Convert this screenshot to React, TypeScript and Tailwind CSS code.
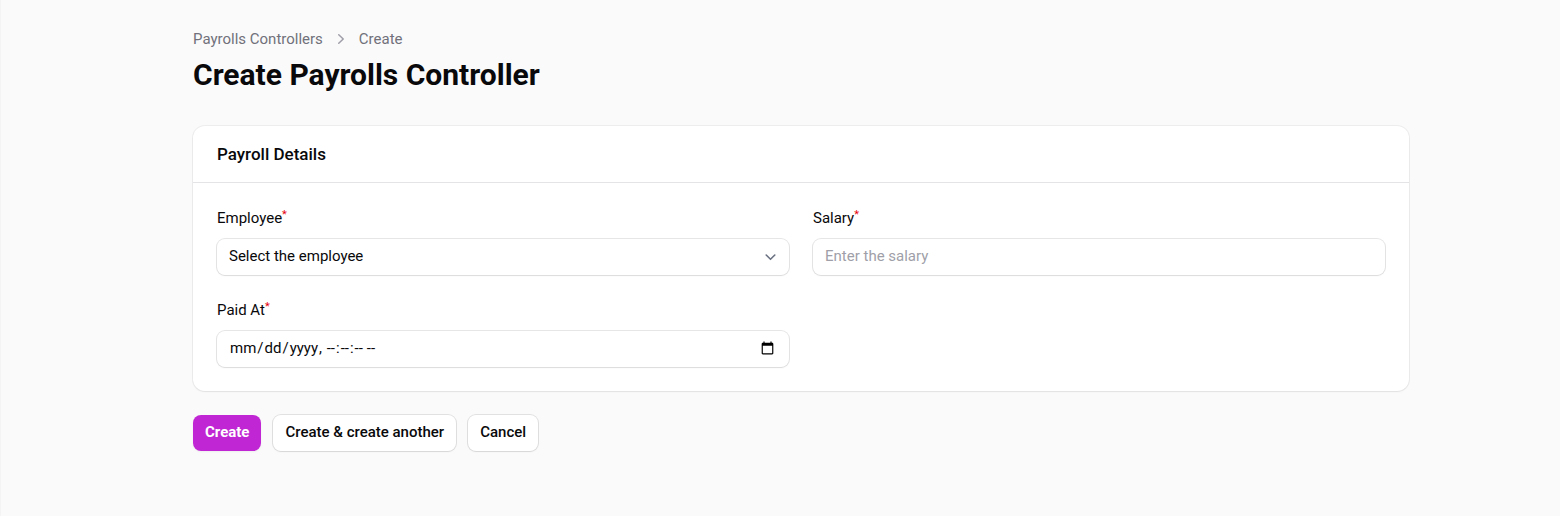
import type { ButtonHTMLAttributes, ReactNode } from "react";

const control =
  "h-9 w-full rounded-lg bg-white px-3 pb-0.5 text-[15px] text-zinc-950 shadow-xs ring-1 ring-zinc-950/10 outline-none focus:ring-2 focus:ring-[#c026d3]";

function Field({ id, label, children }: { id: string; label: string; children: ReactNode }) {
  return (
    <div className="grid content-start gap-2">
      <label htmlFor={id} className="flex h-6 items-start text-[15px] leading-[22px] text-zinc-950">
        {label}
        <span className="text-[11px] leading-4 text-red-600" aria-hidden="true">*</span>
      </label>
      {children}
    </div>
  );
}

function SecondaryButton(props: ButtonHTMLAttributes<HTMLButtonElement>) {
  return (
    <button
      type="button"
      className="h-9 rounded-lg bg-white px-3 pb-0.5 text-[15px] font-medium text-zinc-950 shadow-xs ring-1 ring-zinc-950/10 hover:bg-zinc-50"
      {...props}
    />
  );
}

export default function App() {
  return (
    <div className="min-h-screen border-l border-zinc-100 bg-[#fafafa] pl-[41px] font-['Roboto',sans-serif] text-zinc-950">
      <main className="mx-auto max-w-7xl px-8 pt-[29px] pb-8">
        <nav aria-label="Breadcrumb">
          <ol className="flex items-center gap-2 text-[15px] leading-5 text-zinc-500">
            <li><a href="#payrolls">Payrolls Controllers</a></li>
            <li className="flex items-center gap-2">
              <svg viewBox="0 0 20 20" className="size-5 text-zinc-400" fill="currentColor" aria-hidden="true">
                <path fillRule="evenodd" clipRule="evenodd" d="M7.21 14.77a.75.75 0 0 1 .02-1.06L11.168 10 7.23 6.29a.75.75 0 1 1 1.04-1.08l4.5 4.25a.75.75 0 0 1 0 1.08l-4.5 4.25a.75.75 0 0 1-1.06-.02Z" />
              </svg>
              <a href="#create">Create</a>
            </li>
          </ol>
        </nav>
        <h1 className="mt-2 text-3xl leading-9 font-bold">Create Payrolls Controller</h1>

        <form className="mt-[33px]">
          <section className="rounded-xl bg-white shadow-xs ring-1 ring-zinc-950/5">
            <h2 className="px-6 py-4 text-[17px] leading-6 font-medium">Payroll Details</h2>
            <div className="grid gap-6 border-t border-zinc-200 p-6 md:grid-cols-2">
              <Field id="employee" label="Employee">
                <div className="grid items-center">
                  <select id="employee" required className={`${control} col-start-1 row-start-1 appearance-none pr-9`}>
                    <option value="">Select the employee</option>
                  </select>
                  <svg viewBox="0 0 20 20" className="pointer-events-none col-start-1 row-start-1 mr-2 size-5 justify-self-end text-gray-500" fill="none" stroke="currentColor" strokeWidth="1.6" strokeLinecap="round" strokeLinejoin="round" aria-hidden="true">
                    <path d="m5.2 8 4.3 4.3L13.8 8" />
                  </svg>
                </div>
              </Field>
              <Field id="salary" label="Salary">
                <input id="salary" type="text" inputMode="decimal" required placeholder="Enter the salary" className={`${control} placeholder:text-zinc-400`} />
              </Field>
              <Field id="paid-at" label="Paid At">
                <input id="paid-at" type="datetime-local" step="1" required className={control} />
              </Field>
            </div>
          </section>

          <div className="mt-6 flex flex-wrap gap-3">
            <button type="submit" className="h-9 rounded-lg bg-[#c026d3] px-3 pb-0.5 text-[15px] font-bold text-white shadow-xs hover:bg-[#d946ef]">
              Create
            </button>
            <SecondaryButton>Create &amp; create another</SecondaryButton>
            <SecondaryButton>Cancel</SecondaryButton>
          </div>
        </form>
      </main>
    </div>
  );
}
